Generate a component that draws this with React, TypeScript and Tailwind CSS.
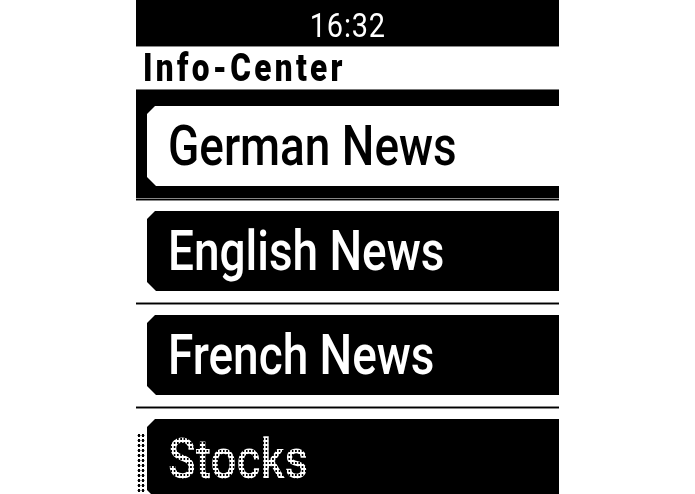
import React from 'react'

const items = [
  { label: 'German News', selected: true },
  { label: 'English News', selected: false },
  { label: 'French News', selected: false },
  { label: 'Stocks', selected: false, fading: true },
]

const chamfer = '[clip-path:polygon(8px_0,100%_0,100%_100%,9px_100%,0_calc(100%-9px),0_8px)]'

function MenuRow({ label, selected, fading }: { label: string; selected: boolean; fading?: boolean }) {
  return (
    <div className={`flex shrink-0 ${selected ? 'bg-black h-[108px] pt-[16px]' : 'bg-white h-[101px] pt-[10px]'}`}>
      <div className="w-[11px] shrink-0 flex flex-col pt-[14px]">
        {fading && (
          <div className="w-[8px] h-[70px] ml-[1px] bg-[radial-gradient(circle,#000_1.2px,transparent_1.7px)] bg-[length:4px_5px]" />
        )}
      </div>
      <div className={`flex-1 h-[80px] flex items-center pl-[21px] ${chamfer} ${selected ? 'bg-white' : 'bg-black'}`}>
        <span
          className={`font-['Roboto',sans-serif] font-medium text-[56px] leading-none whitespace-nowrap origin-left scale-x-[0.82] ${
            fading
              ? 'text-transparent bg-clip-text bg-[radial-gradient(circle,#fff_1.6px,transparent_2.1px)] bg-[length:4px_4px]'
              : selected
              ? 'text-black'
              : 'text-white'
          }`}
        >
          {label}
        </span>
      </div>
    </div>
  )
}

export default function App() {
  return (
    <div className="w-[695px] h-[494px] bg-white flex justify-center overflow-hidden">
      <div className="w-[423px] h-[494px] flex flex-col bg-white overflow-hidden">
        {/* status bar */}
        <div className="h-[46px] shrink-0 bg-black flex items-center justify-center pt-[3px]">
          <span className="font-['Roboto',sans-serif] text-[34px] leading-none text-white tracking-[1px] scale-x-[0.85]">
            16:32
          </span>
        </div>
        <div className="h-px shrink-0 bg-[#8a8a8a]" />

        {/* title */}
        <div className="h-[43px] shrink-0 flex items-center pl-[7px] border-b border-[#777]">
          <span className="font-['Roboto',sans-serif] font-black text-[38px] leading-none tracking-[4px] text-black origin-left scale-x-[0.83] whitespace-nowrap">
            Info-Center
          </span>
        </div>

        {/* menu */}
        {items.map((item, i) => (
          <React.Fragment key={item.label}>
            {i > 0 && <div className="h-[3px] shrink-0 bg-black border-y border-[#888]" />}
            <MenuRow label={item.label} selected={item.selected} fading={item.fading} />
          </React.Fragment>
        ))}
      </div>
    </div>
  )
}
